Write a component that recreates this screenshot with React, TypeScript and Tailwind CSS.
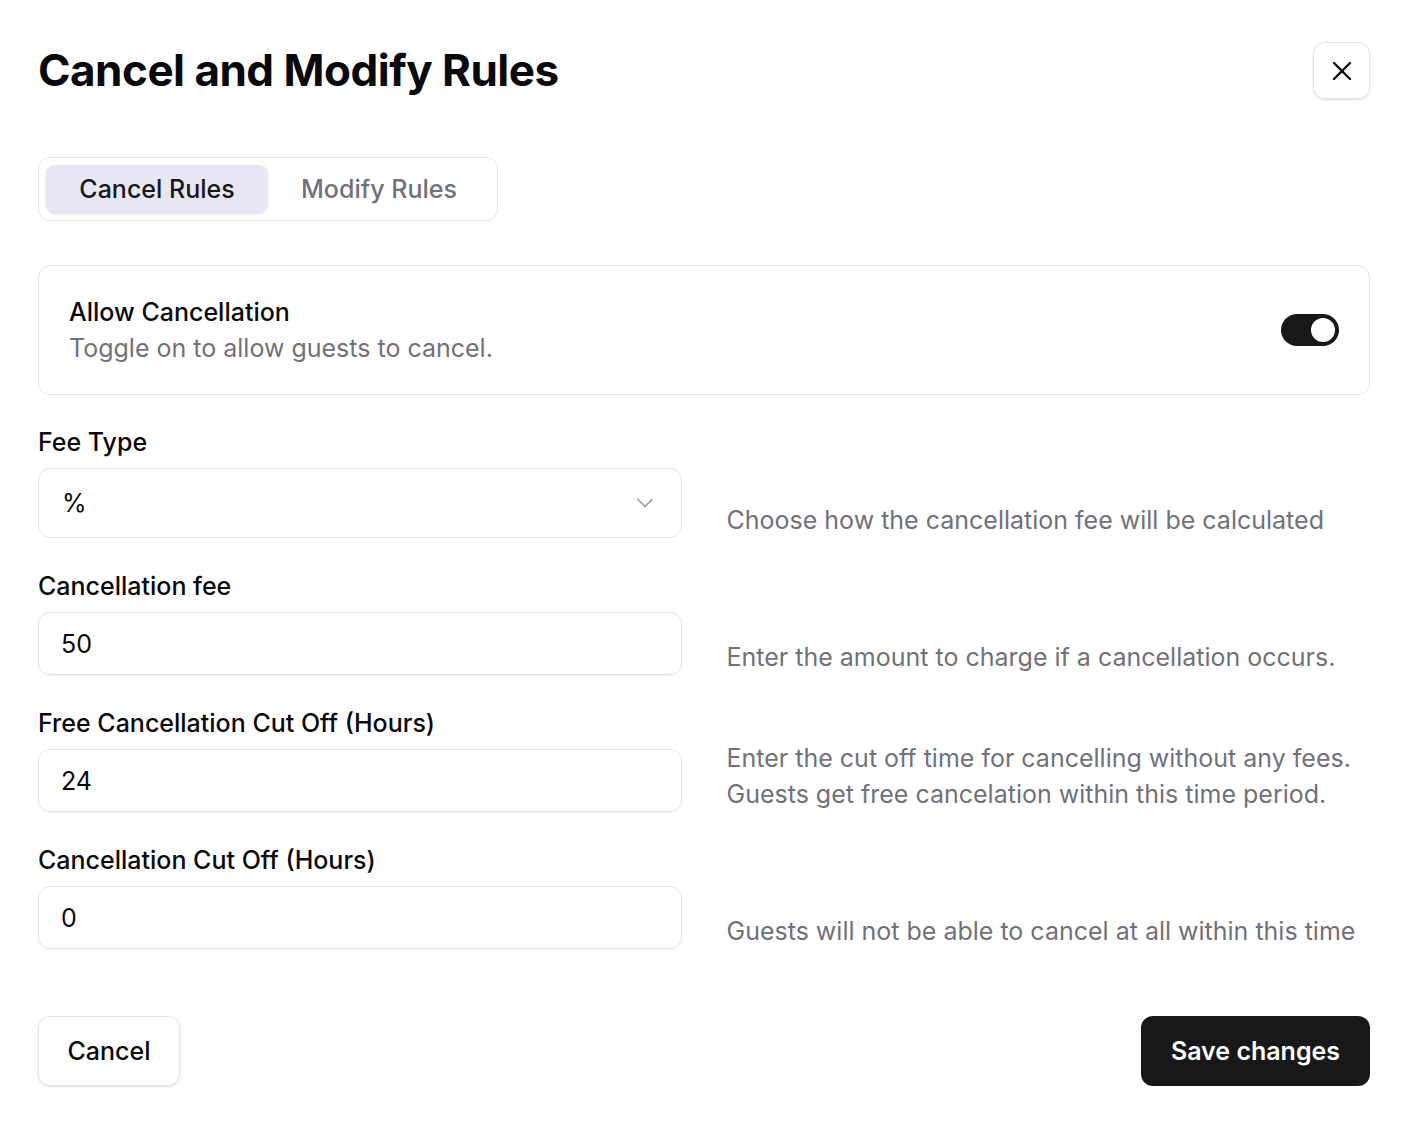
import { useState } from "react";
import { ChevronDown, X } from "lucide-react";

type Field = {
  label: string;
  value: string;
  hint: string[];
  select?: boolean;
};

const fields: Field[] = [
  {
    label: "Fee Type",
    value: "%",
    hint: ["Choose how the cancellation fee will be calculated"],
    select: true,
  },
  {
    label: "Cancellation fee",
    value: "50",
    hint: ["Enter the amount to charge if a cancellation occurs."],
  },
  {
    label: "Free Cancellation Cut Off (Hours)",
    value: "24",
    hint: [
      "Enter the cut off time for cancelling without any fees.",
      "Guests get free cancelation within this time period.",
    ],
  },
  {
    label: "Cancellation Cut Off (Hours)",
    value: "0",
    hint: ["Guests will not be able to cancel at all within this time"],
  },
];

const App = () => {
  const [tab, setTab] = useState("cancel");
  const [allow, setAllow] = useState(true);

  return (
    <div className="min-h-screen bg-white px-[38px] pt-[42px] pb-[42px] text-[#09090b] font-['Inter',sans-serif] text-[25px] leading-[36px]">
      <div className="flex items-start justify-between">
        <h1 className="text-[44px] leading-[56px] font-bold tracking-[-0.5px]">
          Cancel and Modify Rules
        </h1>
        <button className="w-[57px] h-[57px] mr-[2px] flex items-center justify-center rounded-xl border border-[#e4e4e7] shadow-sm">
          <X size={32} strokeWidth={1.8} />
        </button>
      </div>

      <div className="mt-[58px] grid grid-cols-2 w-[460px] p-[7px] rounded-xl border border-[#e4e4e7]">
        <button
          onClick={() => setTab("cancel")}
          className={`h-[48px] rounded-[9px] font-medium ${
            tab === "cancel" ? "bg-[#e7e7f4] shadow-sm text-[#18181b]" : "text-[#71717a]"
          }`}
        >
          Cancel Rules
        </button>
        <button
          onClick={() => setTab("modify")}
          className={`h-[48px] rounded-[9px] font-medium ${
            tab === "modify" ? "bg-[#e7e7f4] shadow-sm text-[#18181b]" : "text-[#71717a]"
          }`}
        >
          Modify Rules
        </button>
      </div>

      <div className="mt-[44px] mr-[2px] h-[130px] flex items-center justify-between rounded-xl border border-[#e4e4e7] px-[30px]">
        <div>
          <div className="font-medium">Allow Cancellation</div>
          <div className="text-[#71717a]">Toggle on to allow guests to cancel.</div>
        </div>
        <button
          onClick={() => setAllow(!allow)}
          className={`w-[58px] h-[32px] rounded-full flex items-center px-[2px] ${
            allow ? "bg-[#18181b] justify-end" : "bg-[#e4e4e7] justify-start"
          }`}
        >
          <span className="block w-[28px] h-[28px] rounded-full bg-white border-2 border-[#18181b]" />
        </button>
      </div>

      <div className="mt-[29px] mr-[2px] flex flex-col gap-[30px]">
        {fields.map((f) => (
          <div key={f.label} className="grid grid-cols-2 gap-[45px] items-end">
            <div className="flex flex-col gap-[8px]">
              <label className="font-medium">{f.label}</label>
              {f.select ? (
                <div className="h-[70px] flex items-center justify-between rounded-xl border border-[#e4e4e7] pl-[23px] pr-[22px]">
                  <span>{f.value}</span>
                  <ChevronDown size={28} strokeWidth={1.5} className="text-[#71717a] opacity-70" />
                </div>
              ) : (
                <div className="h-[63px] flex items-center rounded-xl border border-[#e4e4e7] shadow-xs px-[22px]">
                  {f.value}
                </div>
              )}
            </div>
            <div className="text-[#71717a]">
              {f.hint.map((line) => (
                <div key={line}>{line}</div>
              ))}
            </div>
          </div>
        ))}
      </div>

      <div className="mt-[67px] mr-[2px] flex justify-between">
        <button className="h-[70px] w-[142px] rounded-xl border border-[#e4e4e7] shadow-sm font-medium">
          Cancel
        </button>
        <button className="h-[70px] w-[229px] rounded-xl bg-[#18181b] text-white font-semibold">
          Save changes
        </button>
      </div>
    </div>
  );
};

export default App;
